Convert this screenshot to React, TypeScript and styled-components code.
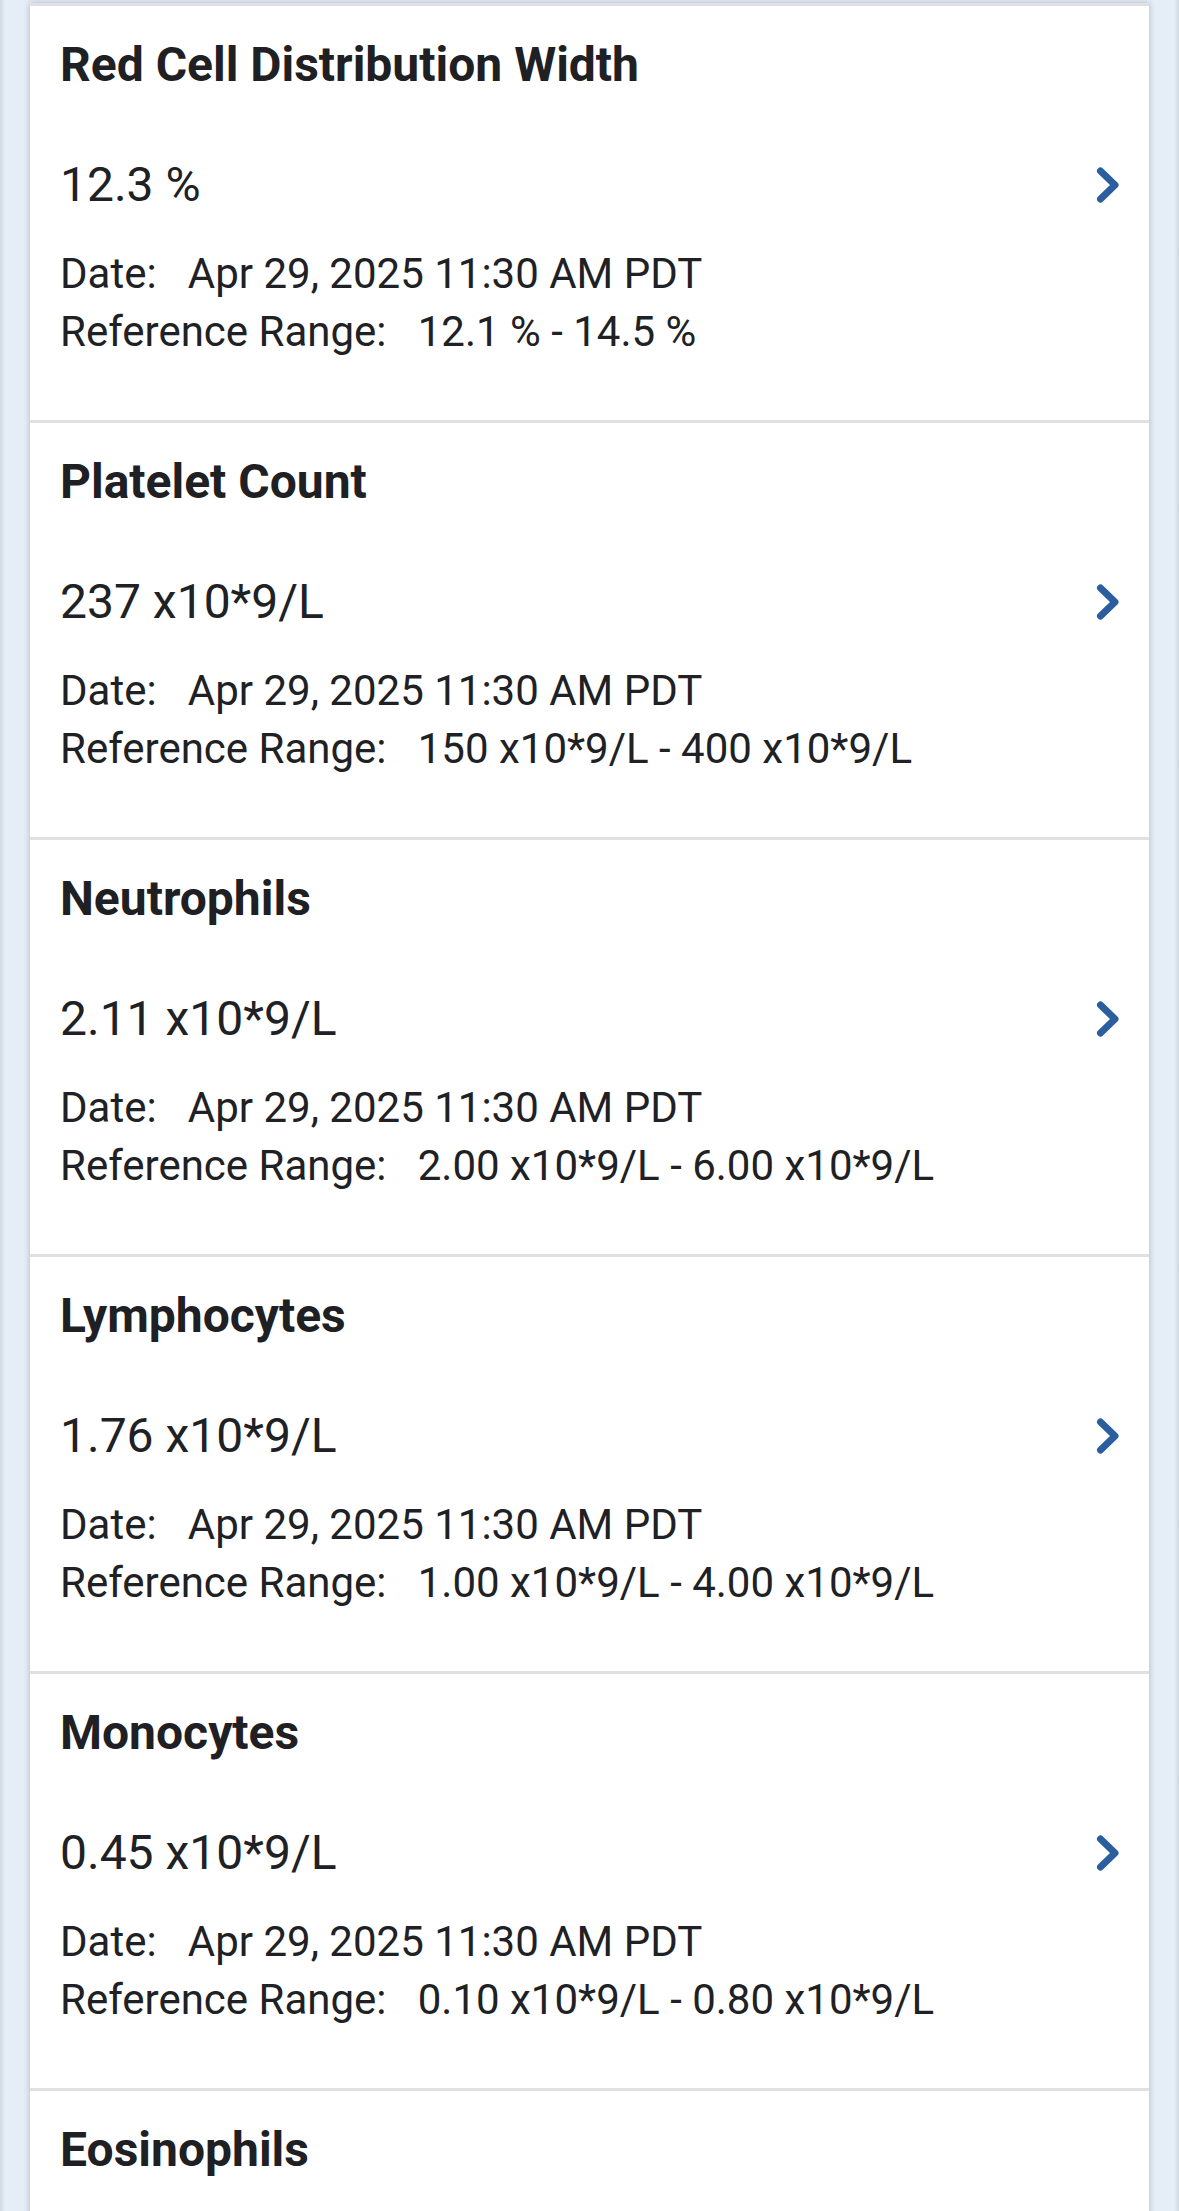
import React from "react";
import styled, { createGlobalStyle } from "styled-components";

const GlobalStyle = createGlobalStyle`
  html, body {
    margin: 0;
    padding: 0;
    background: #e5edf6;
  }
  body {
    font-family: Roboto, "Noto Sans", "Liberation Sans", sans-serif;
    color: #202124;
    -webkit-font-smoothing: antialiased;
  }
`;

const Page = styled.div`
  height: 2211px;
  overflow: hidden;
  padding: 3px 30px 0;
  box-sizing: border-box;
  background: linear-gradient(
    90deg,
    #cfd7e0 0px,
    #e5edf6 5px,
    #e5edf6 calc(100% - 5px),
    #cfd7e0 100%
  );
`;

const List = styled.div`
  background: #ffffff;
  box-shadow: 0 0 6px rgba(60, 80, 110, 0.35);
`;

const Card = styled.div`
  border-top: 3px solid #e0e0e0;
  padding: 29px 30px 0 30px;
  box-sizing: border-box;
  height: 417px;
`;

const Title = styled.div`
  font-size: 48px;
  line-height: 60px;
  font-weight: 700;
  color: #1f2023;
`;

const ValueRow = styled.div`
  display: flex;
  align-items: center;
  justify-content: space-between;
  margin-top: 60px;
  height: 60px;
`;

const Value = styled.div`
  font-size: 48px;
  line-height: 60px;
  font-weight: 400;
`;

const Details = styled.div`
  margin-top: 30px;
`;

const DetailLine = styled.div`
  font-size: 42px;
  line-height: 58px;
  white-space: pre;
`;

const Chevron = () => (
  <svg width="30" height="44" viewBox="0 0 30 44">
    <polyline
      points="11.5,8 26,22 11.5,36"
      fill="none"
      stroke="#2a5e9e"
      strokeWidth="7"
      strokeLinecap="round"
      strokeLinejoin="round"
    />
  </svg>
);

type Result = {
  name: string;
  value: string;
  range: string;
};

const results: Result[] = [
  { name: "Red Cell Distribution Width", value: "12.3 %", range: "12.1 % - 14.5 %" },
  { name: "Platelet Count", value: "237 x10*9/L", range: "150 x10*9/L - 400 x10*9/L" },
  { name: "Neutrophils", value: "2.11 x10*9/L", range: "2.00 x10*9/L - 6.00 x10*9/L" },
  { name: "Lymphocytes", value: "1.76 x10*9/L", range: "1.00 x10*9/L - 4.00 x10*9/L" },
  { name: "Monocytes", value: "0.45 x10*9/L", range: "0.10 x10*9/L - 0.80 x10*9/L" },
  { name: "Eosinophils", value: "0.12 x10*9/L", range: "0.00 x10*9/L - 0.50 x10*9/L" },
];

const DATE = "Apr 29, 2025 11:30 AM PDT";

export default function App() {
  return (
    <>
      <GlobalStyle />
      <Page>
        <List>
          {results.map((r) => (
            <Card key={r.name}>
              <Title>{r.name}</Title>
              <ValueRow>
                <Value>{r.value}</Value>
                <Chevron />
              </ValueRow>
              <Details>
                <DetailLine>{`Date:   ${DATE}`}</DetailLine>
                <DetailLine>{`Reference Range:   ${r.range}`}</DetailLine>
              </Details>
            </Card>
          ))}
        </List>
      </Page>
    </>
  );
}
